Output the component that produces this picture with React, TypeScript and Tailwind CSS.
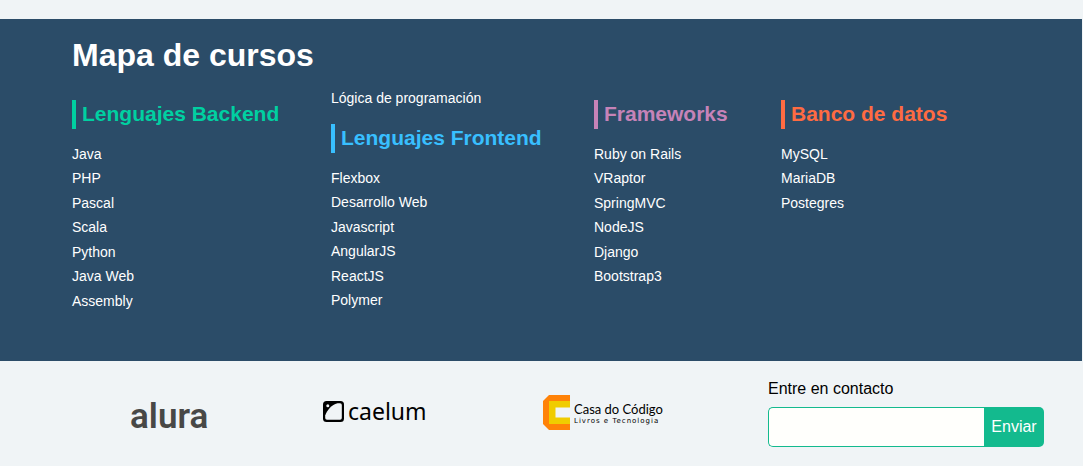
type Category = {
  title: string;
  accent: string;
  intro?: string;
  courses: string[];
};

const categories: Category[] = [
  {
    title: 'Lenguajes Backend',
    accent: 'border-[#00d0a1] text-[#00d0a1]',
    courses: ['Java', 'PHP', 'Pascal', 'Scala', 'Python', 'Java Web', 'Assembly'],
  },
  {
    title: 'Lenguajes Frontend',
    accent: 'border-[#38bfff] text-[#38bfff]',
    intro: 'Lógica de programación',
    courses: ['Flexbox', 'Desarrollo Web', 'Javascript', 'AngularJS', 'ReactJS', 'Polymer'],
  },
  {
    title: 'Frameworks',
    accent: 'border-[#c683b8] text-[#c683b8]',
    courses: ['Ruby on Rails', 'VRaptor', 'SpringMVC', 'NodeJS', 'Django', 'Bootstrap3'],
  },
  {
    title: 'Banco de datos',
    accent: 'border-[#ff6b42] text-[#ff6b42]',
    courses: ['MySQL', 'MariaDB', 'Postegres'],
  },
];

function CourseColumn({ title, accent, intro, courses }: Category) {
  return (
    <div className={intro ? '' : 'pt-3'}>
      {intro && (
        <a href="#" className="mb-4 block text-sm leading-5">
          {intro}
        </a>
      )}
      <h2 className={`w-fit border-l-4 pb-px pl-[6px] text-[21px] leading-7 font-bold whitespace-nowrap ${accent}`}>
        {title}
      </h2>
      <ul className="mt-[13px] grid h-[171px] grid-rows-7 text-sm leading-6">
        {courses.map((course) => (
          <li key={course}>
            <a href="#">{course}</a>
          </li>
        ))}
      </ul>
    </div>
  );
}

function CaelumMark() {
  return (
    <svg viewBox="0 0 21 21" className="h-[21px] w-[21px]" aria-hidden="true">
      <rect width="21" height="21" rx="3.500" fill="#000" />
      <path d="M2.200 17V14.500C4.500 8.500 8.500 4 14.500 2.200H17q1.800 0 1.800 1.800V17q0 1.800-1.800 1.800H4q-1.800 0-1.800-1.800Z" fill="#f0f4f6" />
      <circle cx="4.800" cy="4.800" r="1.500" fill="#f0f4f6" />
    </svg>
  );
}

function CasaMark() {
  return (
    <svg viewBox="0 0 27 35" className="h-[35px] w-[27px]" aria-hidden="true">
      <path d="M6 0h21v35H6l-6-6V6Z" fill="#ff8208" />
      <path d="M6 6h21v23H6Z" fill="#f0cc00" />
      <path d="M12.500 12.500h14.500v10H12.500Z" fill="#f0f4f6" />
    </svg>
  );
}

export default function App() {
  return (
    <div className="min-h-screen bg-[#f0f4f6] pt-[19px] pr-px font-['Liberation_Sans',Arial,sans-serif] text-black">
      <section className="bg-[#2b4c68] pt-4 pb-6 pl-[72px] text-white">
        <h1 className="text-[32px] leading-10 font-bold">Mapa de cursos</h1>
        <div className="mt-[13px] grid grid-cols-[259fr_263fr_187fr_301fr]">
          {categories.map((category) => (
            <CourseColumn key={category.title} {...category} />
          ))}
        </div>
      </section>

      <footer className="grid grid-cols-[193fr_220fr_225fr_276px] items-start pt-[18px] pr-[38px] pb-5 pl-[130px]">
        <a href="#" className="pt-[14px] font-[Roboto,sans-serif] text-[35px] leading-[48px] font-semibold text-[#484846]">
          alura
        </a>
        <a href="#" className="flex items-center gap-1 pt-[18px] font-['Noto_Sans',sans-serif] text-[23px] leading-7">
          <CaelumMark />
          caelum
        </a>
        <a href="#" className="flex items-center gap-1 pt-4 font-[Lato,sans-serif]">
          <CasaMark />
          <span>
            <span className="block text-[13px] leading-4">Casa do Código</span>
            <span className="block font-['DejaVu_Sans',sans-serif] text-[7px] leading-2 tracking-[1px]">
              Livros e Tecnologia
            </span>
          </span>
        </a>
        <form onSubmit={(event) => event.preventDefault()}>
          <label htmlFor="contact" className="block leading-5">
            Entre en contacto
          </label>
          <div className="mt-2 flex h-10">
            <input
              id="contact"
              type="email"
              className="min-w-0 flex-1 rounded-l-[5px] border border-r-0 border-[#13ba8e] bg-[#fffffc] px-2 outline-none"
            />
            <button type="submit" className="w-[60px] rounded-r-[5px] bg-[#13ba8e] text-white">
              Enviar
            </button>
          </div>
        </form>
      </footer>
    </div>
  );
}
